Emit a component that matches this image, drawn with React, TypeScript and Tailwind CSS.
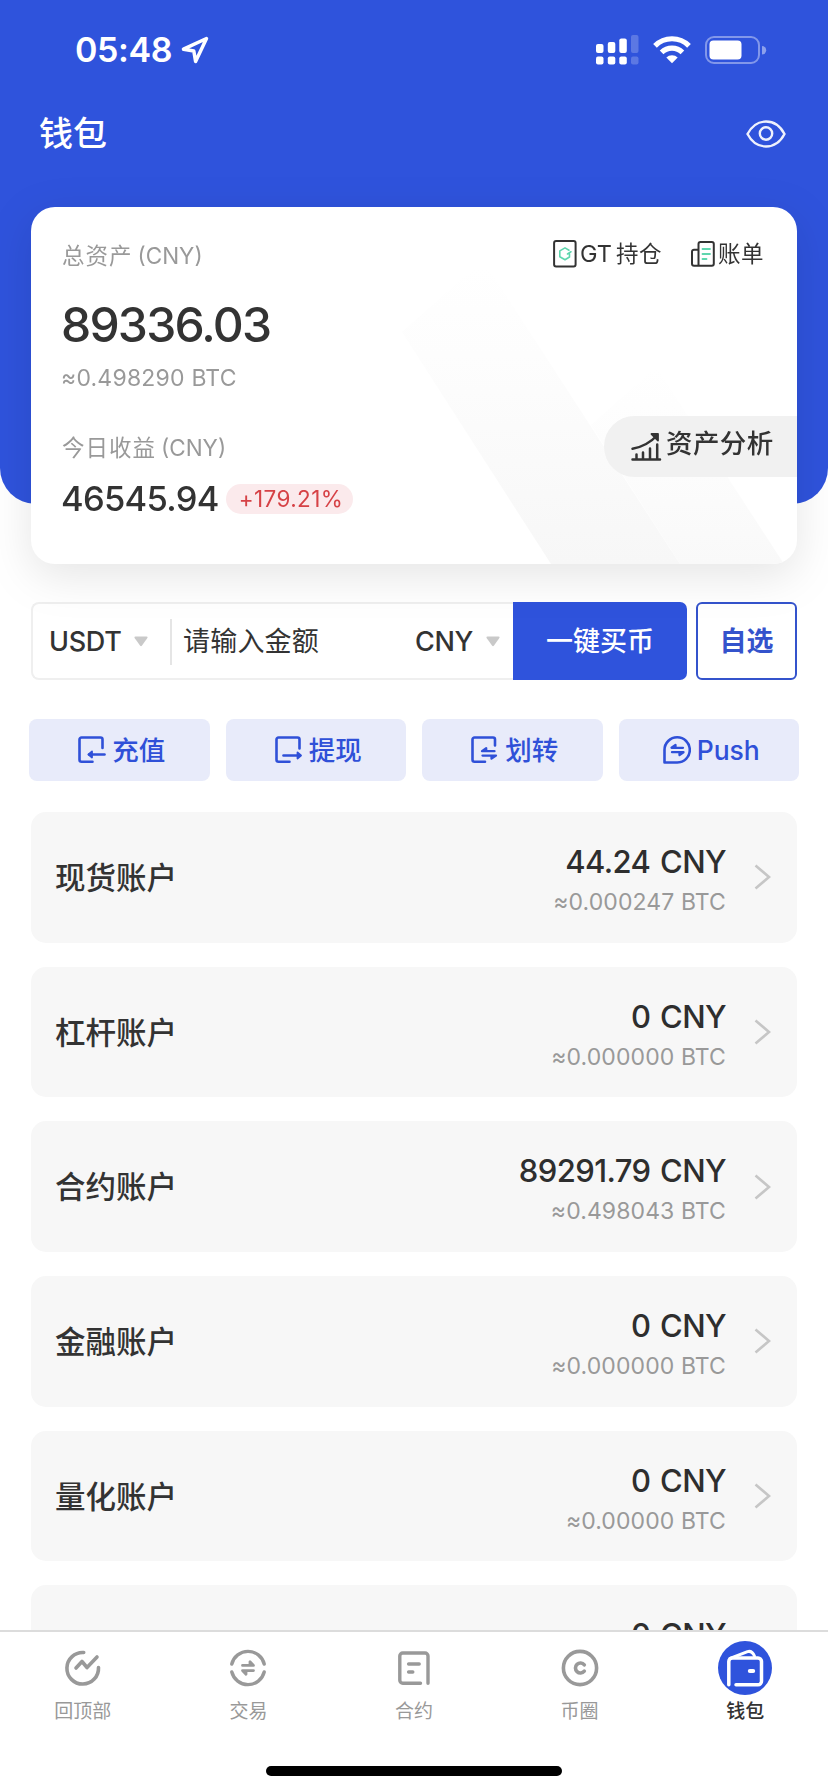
import React from "react";

type Account = { name: string; amount: string; btc: string };

const accounts: Account[] = [
  { name: "现货账户", amount: "44.24 CNY", btc: "≈0.000247 BTC" },
  { name: "杠杆账户", amount: "0 CNY", btc: "≈0.000000 BTC" },
  { name: "合约账户", amount: "89291.79 CNY", btc: "≈0.498043 BTC" },
  { name: "金融账户", amount: "0 CNY", btc: "≈0.000000 BTC" },
  { name: "量化账户", amount: "0 CNY", btc: "≈0.00000 BTC" },
  { name: "", amount: "0 CNY", btc: "" },
];

function StatusBar() {
  return (
    <div className="flex h-[98px] items-center justify-between pl-[75px] pr-[61px] pt-[1px]">
      <div className="flex items-center gap-[9px]">
        <span className="text-[34px] font-semibold leading-[40px] tracking-[-0.4px]">05:48</span>
        <svg width="28" height="28" viewBox="0 0 28 28" fill="none" stroke="#fff" strokeWidth="3.5" strokeLinejoin="round">
          <path d="M25.5 2.5 L2.5 13.2 L12.800 15 L14.6 25.5 Z" />
        </svg>
      </div>
      <div className="flex items-center">
        <svg width="43" height="30" viewBox="0 0 43 30" fill="#fff">
          <rect x="0" y="9" width="7.5" height="9" rx="2" />
          <rect x="11.8" y="7" width="7.5" height="11" rx="2" />
          <rect x="23.3" y="3.5" width="7.5" height="14.5" rx="2" />
          <rect x="35" y="0" width="7.5" height="18" rx="2" opacity="0.22" />
          <rect x="0" y="21.5" width="7.5" height="8" rx="2" />
          <rect x="11.8" y="21.5" width="7.5" height="8" rx="2" />
          <rect x="23.3" y="21.5" width="7.5" height="8" rx="2" />
          <rect x="35" y="21.5" width="7.5" height="8" rx="2" opacity="0.22" />
        </svg>
        <svg className="ml-[14px]" width="38" height="28" viewBox="0 0 38 28" fill="none" stroke="#fff" strokeWidth="5.2">
          <path d="M2 9.8 A24 24 0 0 1 36 9.8" />
          <path d="M8.6 16.4 A14.8 14.8 0 0 1 29.4 16.4" />
          <path d="M13.3 21.6 A8 8 0 0 1 24.7 21.6 L19 27.3 Z" fill="#fff" stroke="none" />
        </svg>
        <svg className="ml-[14px]" width="62" height="30" viewBox="0 0 62 30" fill="none">
          <rect x="1" y="2" width="53" height="26" rx="8" stroke="#fff" strokeOpacity="0.4" strokeWidth="2" />
          <rect x="4.5" y="5.5" width="32" height="19" rx="4" fill="#fff" />
          <path d="M57 11 a4.2 4.2 0 0 1 0 8.4 Z" fill="#fff" fillOpacity="0.45" />
        </svg>
      </div>
    </div>
  );
}

function EyeIcon() {
  return (
    <svg width="40" height="28" viewBox="0 0 40 28" fill="none" stroke="#fff" strokeOpacity="0.92" strokeWidth="2.4">
      <path d="M1.5 14 C6 5.5 12.5 1.5 20 1.5 C27.5 1.5 34 5.5 38.5 14 C34 22.5 27.5 26.5 20 26.5 C12.5 26.5 6 22.5 1.5 14 Z" />
      <circle cx="20" cy="13.5" r="6.2" />
    </svg>
  );
}

function GtIcon() {
  return (
    <svg width="24" height="28" viewBox="0 0 24 28" fill="none" strokeLinecap="round" strokeLinejoin="round">
      <rect x="1.1" y="1.1" width="21.5" height="25.3" rx="2" stroke="#333" strokeWidth="2" />
      <path d="M16 10.2 L12 7.9 L6.8 10.9 V16.8 L12 19.8 L16.5 17 V14 M14.5 14 L18 11.8" stroke="#5fd6ae" strokeWidth="1.6" />
    </svg>
  );
}

function BillIcon() {
  return (
    <svg width="24" height="26" viewBox="0 0 24 26" fill="none" strokeLinecap="round" strokeLinejoin="round">
      <path d="M7.5 24.8 V3 a2 2 0 0 1 2 -2 H20.8 a2 2 0 0 1 2 2 V22.8 a2 2 0 0 1 -2 2 H3 a2 2 0 0 1 -2 -2 V10.7 a2 2 0 0 1 2 -2 H7.5" stroke="#333" strokeWidth="2" />
      <path d="M11.5 8 H19 M11.5 13 H19 M11.5 18 H15.5" stroke="#5fd6ae" strokeWidth="1.8" />
    </svg>
  );
}

function AnalysisIcon() {
  return (
    <svg width="31" height="30" viewBox="0 0 31 30" fill="none" stroke="#333" strokeWidth="2.5" strokeLinecap="round" strokeLinejoin="round">
      <path d="M1.5 27.5 H29 M5.5 27 V22.5 M12 27 V20.5 M19 27 V16.5 M26.2 27 V12.5" />
      <path d="M1.5 16.800 C11 15 19.5 10.5 26 3.5" />
      <path d="M20.5 2 H27 V8.5 Z" fill="#333" strokeWidth="1.8" />
    </svg>
  );
}

function DepositIcon() {
  return (
    <svg width="28" height="28" viewBox="0 0 28 28" fill="none" stroke="#2f50d8" strokeWidth="2.6" strokeLinecap="round" strokeLinejoin="round">
      <path d="M24.5 12 V3.5 a2 2 0 0 0 -2 -2 H3.5 a2 2 0 0 0 -2 2 V23.8 a2 2 0 0 0 2 2 H14.5" />
      <path d="M26.5 18.5 H11" />
      <path d="M14 15.5 L10.5 18.5 L14 21.5 Z" fill="#2f50d8" strokeWidth="1.8" />
    </svg>
  );
}

function WithdrawIcon() {
  return (
    <svg width="28" height="28" viewBox="0 0 28 28" fill="none" stroke="#2f50d8" strokeWidth="2.6" strokeLinecap="round" strokeLinejoin="round">
      <path d="M24.5 12.5 V3.5 a2 2 0 0 0 -2 -2 H3.5 a2 2 0 0 0 -2 2 V23.8 a2 2 0 0 0 2 2 H14.5" />
      <path d="M8.5 19.5 H25" />
      <path d="M22.5 16.5 L26 19.5 L22.5 22.5 Z" fill="#2f50d8" strokeWidth="1.8" />
    </svg>
  );
}

function TransferIcon() {
  return (
    <svg width="28" height="28" viewBox="0 0 28 28" fill="none" stroke="#2f50d8" strokeWidth="2.6" strokeLinecap="round" strokeLinejoin="round">
      <path d="M24 9.500 V3.5 a2 2 0 0 0 -2 -2 H3.5 a2 2 0 0 0 -2 2 V23.8 a2 2 0 0 0 2 2 H14" />
      <path d="M23.5 15.2 H11 L15.2 12.2 V15.2" strokeWidth="2.3" />
      <path d="M11.5 19.6 H25 L20.5 22.6 V19.6" strokeWidth="2.3" />
    </svg>
  );
}

function PushIcon() {
  return (
    <svg width="28" height="28" viewBox="0 0 28 28" fill="none" stroke="#2f50d8" strokeWidth="2.6" strokeLinecap="round" strokeLinejoin="round">
      <path d="M14.2 1.300 a12.5 12.5 0 0 1 0 25.2 H1.5 V14 A12.7 12.7 0 0 1 14.2 1.3 Z" />
      <path d="M20 11.800 H8.500 L12.5 9 V11.8" strokeWidth="2.3" />
      <path d="M9 16.200 H20.5 L16.5 19 V16.2" strokeWidth="2.3" />
    </svg>
  );
}

function Caret() {
  return (
    <svg width="14" height="11" viewBox="0 0 14 11" fill="#c9c9c9">
      <path d="M1.5 0.5 H12.5 Q14.2 0.8 13.2 2.3 L8 9.6 Q7 10.8 6 9.6 L0.8 2.3 Q-0.2 0.8 1.5 0.5 Z" />
    </svg>
  );
}

function AssetCard() {
  return (
    <section className="relative mx-[31px] -mt-[297px] h-[357px] overflow-hidden rounded-[24px] bg-white text-[#333]">
      <svg className="absolute inset-0" width="766" height="357" viewBox="0 0 766 357">
        <defs>
          <linearGradient id="bandA" x1="0" y1="60" x2="0" y2="357" gradientUnits="userSpaceOnUse">
            <stop offset="0" stopColor="#f7f7f7" stopOpacity="0" />
            <stop offset="0.35" stopColor="#f7f7f7" stopOpacity="0.3" />
            <stop offset="1" stopColor="#f7f7f7" />
          </linearGradient>
          <linearGradient id="bandB" x1="0" y1="160" x2="0" y2="357" gradientUnits="userSpaceOnUse">
            <stop offset="0" stopColor="#f9f9f9" stopOpacity="0" />
            <stop offset="0.4" stopColor="#f9f9f9" stopOpacity="0.35" />
            <stop offset="1" stopColor="#f9f9f9" />
          </linearGradient>
        </defs>
        <path d="M371 125 L452 53 L649 357 H520 Z" fill="url(#bandA)" />
        <path d="M560 218 L625 160 L753 357 H649 Z" fill="url(#bandB)" />
      </svg>
      <div className="relative flex h-full">
        <div className="flex flex-col pl-[30px] pt-[32px]">
          <div className="flex h-[33px] items-center gap-[5px] pl-[1px] text-[22.5px] leading-[33px] text-[#999]">
            <span className="tracking-[1px]">总资产</span>
            <span>(CNY)</span>
          </div>
          <div className="mt-[25px] h-[56px] text-[48px] font-medium leading-[56px] tracking-[-1.8px]">89336.03</div>
          <div className="mt-[9px] h-[32px] text-[23px] leading-[32px] tracking-[0.2px] text-[#999]">≈0.498290 BTC</div>
          <div className="mt-[37px] flex h-[33px] items-center gap-[5px] pl-[1px] text-[22.5px] leading-[33px] text-[#999]">
            <span className="tracking-[1px]">今日收益</span>
            <span>(CNY)</span>
          </div>
          <div className="mt-[15px] flex h-[40px] items-center">
            <span className="w-[165px] text-[34.5px] font-medium leading-[40px] tracking-[-0.7px]">46545.94</span>
            <span className="flex h-[30px] w-[127px] items-center justify-center rounded-full bg-[#fbeaec] pl-[3px] text-[22.5px] leading-[30px] tracking-[0.4px] text-[#d64246]">+179.21%</span>
          </div>
        </div>
        <div className="ml-auto flex flex-col items-end">
          <div className="mr-[33px] mt-[30px] flex h-[34px] items-center text-[22.5px] leading-[34px]">
            <GtIcon />
            <span className="ml-[3px] text-[23.5px]">GT</span>
            <span className="ml-[4px] tracking-[0.5px]">持仓</span>
            <span className="ml-[29px] flex"><BillIcon /></span>
            <span className="ml-[3px] tracking-[0.5px]">账单</span>
          </div>
          <button className="mt-[145px] flex h-[61px] w-[193px] items-center rounded-l-full bg-[#f1f1f1] pl-[27px] text-[26.5px] font-medium">
            <AnalysisIcon />
            <span className="-mt-[7px] ml-[4px] leading-[40px] tracking-[0.4px]">资产分析</span>
          </button>
        </div>
      </div>
    </section>
  );
}

function BuyBar() {
  return (
    <section className="mx-[31px] mt-[38px] flex h-[78px] text-[27px] leading-[40px] text-[#333]">
      <div className="flex w-[482px] items-center rounded-l-[8px] border-2 border-r-0 border-[#efefef] bg-white pl-[16px] pt-[1px]">
        <span className="w-[72px] font-medium tracking-[-0.3px]">USDT</span>
        <span className="ml-[13px]"><Caret /></span>
        <span className="ml-[22px] h-[46px] w-[2px] bg-[#e5e5e5]" />
        <span className="ml-[11px] pt-[1px] tracking-[0.2px]">请输入金额</span>
        <span className="ml-auto font-medium tracking-[-0.3px]">CNY</span>
        <span className="ml-[13px] mr-[13px]"><Caret /></span>
      </div>
      <button className="flex w-[174px] items-center justify-center rounded-r-[7px] bg-[#2f53dc] pt-[2px] font-medium text-white">一键买币</button>
      <button className="ml-[9px] flex w-[101px] items-center justify-center rounded-[6px] border-2 border-[#3453cc] pt-[2px] font-bold text-[#3453cc]">自选</button>
    </section>
  );
}

const actions = [
  { label: "充值", icon: <DepositIcon /> },
  { label: "提现", icon: <WithdrawIcon /> },
  { label: "划转", icon: <TransferIcon /> },
  { label: "Push", icon: <PushIcon /> },
];

function Actions() {
  return (
    <section className="mx-[29px] mt-[39px] grid grid-cols-4 gap-[16px]">
      {actions.map((a) => (
        <button key={a.label} className="flex h-[62px] items-center justify-center gap-[6px] rounded-[8px] bg-[#e8ebfa] pl-[5px] text-[26.5px] font-medium leading-[40px] text-[#2f50d8]">
          {a.icon}
          <span>{a.label}</span>
        </button>
      ))}
    </section>
  );
}

function AccountRow({ account }: { account: Account }) {
  return (
    <div className="flex h-[130.7px] shrink-0 items-center rounded-[15px] bg-[#f7f7f7] pl-[24px] pr-[26px]">
      <span className="pt-[1px] text-[30.5px] font-medium leading-[44px] text-[#333]">{account.name}</span>
      <div className="ml-auto flex flex-col items-end pt-[9px]">
        <span className="h-[40px] text-[31px] font-medium leading-[40px] tracking-[-0.6px] text-[#2e2e2e] [word-spacing:2px]">{account.amount}</span>
        <span className="h-[40px] text-[23px] leading-[40px] tracking-[0.1px] text-[#999]">{account.btc}</span>
      </div>
      <svg className="ml-[28px]" width="17" height="26" viewBox="0 0 17 26" fill="none" stroke="#c6c6c6" strokeWidth="2.6">
        <path d="M1.5 1.5 L15 13 L1.5 24.5" />
      </svg>
    </div>
  );
}

function TopIcon() {
  return (
    <svg width="40" height="40" viewBox="0 0 40 40" fill="none" stroke="#999" strokeWidth="3.6" strokeLinecap="round" strokeLinejoin="round">
      <path d="M20.7 4.5 A15.8 15.8 0 1 0 35.5 19.5" />
      <path d="M13 20 L19 13.5 L24 19.5 L34 9" />
    </svg>
  );
}

function TradeIcon() {
  return (
    <svg width="40" height="40" viewBox="0 0 40 40" fill="none" stroke="#999" strokeWidth="3.4" strokeLinecap="round" strokeLinejoin="round">
      <path d="M3.8 16 A16.7 16.7 0 0 1 36.2 16 M36.2 24 A16.7 16.7 0 0 1 3.8 24" />
      <path d="M14.5 17.4 H25.5 L22 13.8 V17.4" strokeWidth="2.8" />
      <path d="M25.5 22.6 H14.5 L18 26.2 V22.6" strokeWidth="2.8" />
    </svg>
  );
}

function ContractIcon() {
  return (
    <svg width="40" height="40" viewBox="0 0 40 40" fill="none" stroke="#999" strokeWidth="3.4" strokeLinecap="round" strokeLinejoin="round">
      <path d="M34 35.3 V8 a3 3 0 0 0 -3 -3 H8.800 a3 3 0 0 0 -3 3 V32.3 a3 3 0 0 0 3 3 H26.5" />
      <path d="M14.6 16 H25.2 M14.6 24 H18.8" />
    </svg>
  );
}

function CoinIcon() {
  return (
    <svg width="40" height="40" viewBox="0 0 40 40" fill="none" stroke="#999" strokeLinecap="round">
      <circle cx="20" cy="20" r="16.6" strokeWidth="3.6" />
      <path d="M24.3 16.8 A5 5 0 1 0 24.3 23.2" strokeWidth="3.6" />
    </svg>
  );
}

function WalletIcon() {
  return (
    <svg width="54" height="54" viewBox="0 0 54 54" fill="none" stroke="#fff" strokeWidth="3.5" strokeLinecap="round" strokeLinejoin="round">
      <circle cx="27" cy="27" r="27" fill="#2f53dc" stroke="none" />
      <path d="M10.8 43.8 V20.500 a3.5 3.5 0 0 1 3.5 -3.5 H40 a3.5 3.5 0 0 1 3.5 3.5 V40.3 a3.5 3.5 0 0 1 -3.5 3.5 H18" />
      <path d="M12 17.500 L29.5 10.600 Q34 9.300 36.5 15" strokeWidth="3" />
      <path d="M31.8 30 H35.2" strokeWidth="4" />
    </svg>
  );
}

const tabs = [
  { label: "回顶部", icon: <TopIcon />, active: false },
  { label: "交易", icon: <TradeIcon />, active: false },
  { label: "合约", icon: <ContractIcon />, active: false },
  { label: "币圈", icon: <CoinIcon />, active: false },
  { label: "钱包", icon: <WalletIcon />, active: true },
];

function TabBar() {
  return (
    <nav className="flex h-[162px] shrink-0 flex-col items-center border-t-2 border-[#dcdcdc] bg-white">
      <div className="grid w-full grid-cols-5">
        {tabs.map((t) => (
          <div key={t.label} className="flex flex-col items-center pt-[9px]">
            <div className="flex h-[54px] items-center">{t.icon}</div>
            <span className={t.active ? "mt-[3px] text-[19px] font-medium leading-[28px] text-[#333]" : "mt-[3px] text-[19px] leading-[28px] text-[#999]"}>{t.label}</span>
          </div>
        ))}
      </div>
      <div className="mt-[40px] h-[10px] w-[296px] rounded-full bg-black" />
    </nav>
  );
}

export default function App() {
  return (
    <div className="flex h-[1792px] w-[828px] flex-col overflow-hidden bg-white font-['Inter','Noto_Sans_CJK_SC',sans-serif]">
      <header className="h-[504px] shrink-0 rounded-b-[36px] bg-[#2f53dc] text-white">
        <StatusBar />
        <div className="flex h-[71px] items-center justify-between pl-[39px] pr-[42px]">
          <h1 className="text-[34px] font-medium leading-[50px]">钱包</h1>
          <EyeIcon />
        </div>
      </header>
      <div className="shrink-0 [filter:drop-shadow(0_12px_22px_rgba(0,0,0,0.10))]">
        <AssetCard />
      </div>
      <BuyBar />
      <Actions />
      <main className="mx-[31px] mt-[31px] flex min-h-0 flex-1 flex-col gap-[24px] overflow-hidden">
        {accounts.map((a, i) => (
          <AccountRow key={i} account={a} />
        ))}
      </main>
      <TabBar />
    </div>
  );
}
